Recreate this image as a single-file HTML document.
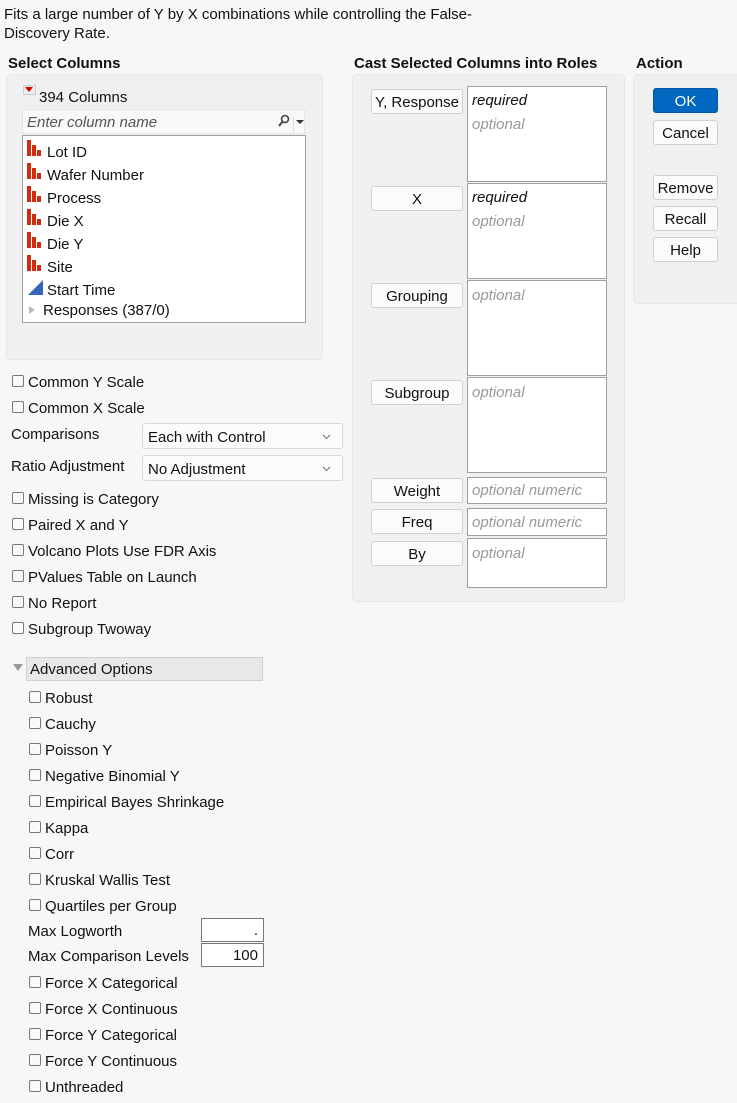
<!DOCTYPE html><html><head><style>
body{margin:0;width:737px;height:1103px;background:#f7f7f7;font-family:"Liberation Sans",sans-serif;font-size:15px;color:#111;position:relative;overflow:hidden}
.a{position:absolute;white-space:nowrap}
.t{margin-top:2px}
.b{font-weight:bold;font-size:15px}
.pn{position:absolute;background:#f0f0f0;border:1px solid #e6e6e6;border-radius:5px}
.cb{position:absolute;width:10px;height:10px;border:1px solid #777;border-radius:2px;background:#fafafa}
.btn{position:absolute;background:#fbfbfb;border:1px solid #d0d0d0;border-radius:3px;text-align:center;line-height:25px;box-sizing:border-box;height:25px}
.box{position:absolute;background:#fff;border:1px solid #a0a0a0;box-sizing:border-box}
.it{font-style:italic}
.g{color:#999}
.dd{position:absolute;background:#fbfbfb;border:1px solid #d8d8d8;border-radius:3px;box-sizing:border-box;height:26px;line-height:27px;padding-left:5px}
.dd svg{position:absolute;right:11px;top:10px}
</style></head><body>
<div class="a" style="left:4px;top:5px;line-height:19px">Fits a large number of Y by X combinations while controlling the False-<br>Discovery Rate.</div>
<div class="a b" style="left:8px;top:55px">Select Columns</div>
<div class="a b" style="left:354px;top:55px">Cast Selected Columns into Roles</div>
<div class="a b" style="left:636px;top:55px">Action</div>

<div class="pn" style="left:6px;top:74px;width:315px;height:284px"></div>
<div class="a" style="left:23px;top:85px;width:11px;height:8px;background:#eee;border:1px solid #ccc"></div>
<div class="a" style="left:25px;top:87px;width:0;height:0;border-left:4px solid transparent;border-right:4px solid transparent;border-top:5px solid #d00"></div>
<div class="a" style="left:39px;top:89px">394 Columns</div>
<div class="a" style="left:22px;top:109px;width:283px;height:25px;background:#f8f8f8;border:1px solid #e4e4e4;box-sizing:border-box"></div>
<div class="a it" style="left:27px;top:114px;color:#555">Enter column name</div>
<svg class="a" style="left:277px;top:114px" width="14" height="14"><circle cx="8" cy="5" r="3.5" fill="none" stroke="#444" stroke-width="1.6"/><path d="M6 7 L2 12" stroke="#444" stroke-width="2"/></svg>
<div class="a" style="left:293px;top:116px;width:1px;height:18px;background:#e0e0e0"></div>
<div class="a" style="left:296px;top:120px;border-left:4px solid transparent;border-right:4px solid transparent;border-top:4px solid #333"></div>
<div class="box" style="left:22px;top:135px;width:284px;height:188px"></div>
<svg class="a" style="left:27px;top:140px" width="18" height="160">
<g fill="#d42a10"><g id="i"><rect x="0" y="0" width="4" height="16"/><rect x="5" y="5" width="4" height="11"/><rect x="10" y="10" width="4" height="6"/></g>
<use href="#i" y="23"/><use href="#i" y="46"/><use href="#i" y="69"/><use href="#i" y="92"/><use href="#i" y="115"/></g>
<path d="M1 155 L16 140 L16 155Z" fill="#3366bb"/></svg>
<div class="a" style="left:47px;top:141px;line-height:23px">Lot ID<br>Wafer Number<br>Process<br>Die X<br>Die Y<br>Site<br>Start Time</div>
<div class="a" style="left:29px;top:306px;border-top:4px solid transparent;border-bottom:4px solid transparent;border-left:6px solid #bbb"></div>
<div class="a" style="left:43px;top:302px">Responses (387/0)</div>

<div class="cb" style="left:12px;top:375px"></div><div class="a t" style="left:28px;top:372px">Common Y Scale</div>
<div class="cb" style="left:12px;top:401px"></div><div class="a t" style="left:28px;top:398px">Common X Scale</div>
<div class="a t" style="left:11px;top:424px">Comparisons</div>
<div class="dd" style="left:142px;top:423px;width:201px">Each with Control<svg width="9" height="6"><path d="M1 1 L4.5 4.5 L8 1" stroke="#777" fill="none"/></svg></div>
<div class="a t" style="left:11px;top:456px">Ratio Adjustment</div>
<div class="dd" style="left:142px;top:455px;width:201px">No Adjustment<svg width="9" height="6"><path d="M1 1 L4.5 4.5 L8 1" stroke="#777" fill="none"/></svg></div>
<div class="cb" style="left:12px;top:492px"></div><div class="a t" style="left:28px;top:489px">Missing is Category</div>
<div class="cb" style="left:12px;top:518px"></div><div class="a t" style="left:28px;top:515px">Paired X and Y</div>
<div class="cb" style="left:12px;top:544px"></div><div class="a t" style="left:28px;top:541px">Volcano Plots Use FDR Axis</div>
<div class="cb" style="left:12px;top:570px"></div><div class="a t" style="left:28px;top:567px">PValues Table on Launch</div>
<div class="cb" style="left:12px;top:596px"></div><div class="a t" style="left:28px;top:593px">No Report</div>
<div class="cb" style="left:12px;top:622px"></div><div class="a t" style="left:28px;top:619px">Subgroup Twoway</div>

<div class="a" style="left:13px;top:664px;border-left:5px solid transparent;border-right:5px solid transparent;border-top:7px solid #999"></div>
<div class="a" style="left:26px;top:657px;width:237px;height:24px;background:#e8e8e8;border:1px solid #d0d0d0;box-sizing:border-box"></div>
<div class="a t" style="left:30px;top:659px">Advanced Options</div>

<div class="cb" style="left:29px;top:691px"></div><div class="a t" style="left:45px;top:688px">Robust</div>
<div class="cb" style="left:29px;top:717px"></div><div class="a t" style="left:45px;top:714px">Cauchy</div>
<div class="cb" style="left:29px;top:743px"></div><div class="a t" style="left:45px;top:740px">Poisson Y</div>
<div class="cb" style="left:29px;top:769px"></div><div class="a t" style="left:45px;top:766px">Negative Binomial Y</div>
<div class="cb" style="left:29px;top:795px"></div><div class="a t" style="left:45px;top:792px">Empirical Bayes Shrinkage</div>
<div class="cb" style="left:29px;top:821px"></div><div class="a t" style="left:45px;top:818px">Kappa</div>
<div class="cb" style="left:29px;top:847px"></div><div class="a t" style="left:45px;top:844px">Corr</div>
<div class="cb" style="left:29px;top:873px"></div><div class="a t" style="left:45px;top:870px">Kruskal Wallis Test</div>
<div class="cb" style="left:29px;top:899px"></div><div class="a t" style="left:45px;top:896px">Quartiles per Group</div>
<div class="a t" style="left:28px;top:921px">Max Logworth</div>
<div class="box" style="left:201px;top:918px;width:63px;height:24px;border-color:#777;text-align:right;padding-right:5px;line-height:23px">.</div>
<div class="a t" style="left:28px;top:946px">Max Comparison Levels</div>
<div class="box" style="left:201px;top:943px;width:63px;height:24px;border-color:#777;text-align:right;padding-right:5px;line-height:23px">100</div>
<div class="cb" style="left:29px;top:976px"></div><div class="a t" style="left:45px;top:973px">Force X Categorical</div>
<div class="cb" style="left:29px;top:1002px"></div><div class="a t" style="left:45px;top:999px">Force X Continuous</div>
<div class="cb" style="left:29px;top:1028px"></div><div class="a t" style="left:45px;top:1025px">Force Y Categorical</div>
<div class="cb" style="left:29px;top:1054px"></div><div class="a t" style="left:45px;top:1051px">Force Y Continuous</div>
<div class="cb" style="left:29px;top:1080px"></div><div class="a t" style="left:45px;top:1077px">Unthreaded</div>

<div class="pn" style="left:352px;top:74px;width:271px;height:526px"></div>
<div class="btn" style="left:371px;top:89px;width:92px">Y, Response</div>
<div class="box" style="left:467px;top:86px;width:140px;height:96px"></div>
<div class="a it" style="left:472px;top:92px">required</div><div class="a it g" style="left:472px;top:116px">optional</div>
<div class="btn" style="left:371px;top:186px;width:92px">X</div>
<div class="box" style="left:467px;top:183px;width:140px;height:96px"></div>
<div class="a it" style="left:472px;top:189px">required</div><div class="a it g" style="left:472px;top:213px">optional</div>
<div class="btn" style="left:371px;top:283px;width:92px">Grouping</div>
<div class="box" style="left:467px;top:280px;width:140px;height:96px"></div>
<div class="a it g" style="left:472px;top:287px">optional</div>
<div class="btn" style="left:371px;top:380px;width:92px">Subgroup</div>
<div class="box" style="left:467px;top:377px;width:140px;height:96px"></div>
<div class="a it g" style="left:472px;top:384px">optional</div>
<div class="btn" style="left:371px;top:478px;width:92px">Weight</div>
<div class="box" style="left:467px;top:477px;width:140px;height:27px"></div>
<div class="a it g" style="left:472px;top:482px">optional numeric</div>
<div class="btn" style="left:371px;top:509px;width:92px">Freq</div>
<div class="box" style="left:467px;top:508px;width:140px;height:28px"></div>
<div class="a it g" style="left:472px;top:514px">optional numeric</div>
<div class="btn" style="left:371px;top:541px;width:92px">By</div>
<div class="box" style="left:467px;top:538px;width:140px;height:50px"></div>
<div class="a it g" style="left:472px;top:545px">optional</div>

<div class="pn" style="left:633px;top:74px;width:110px;height:228px"></div>
<div class="btn" style="left:653px;top:88px;width:65px;background:#0067c0;border-color:#0058a8;color:#fff">OK</div>
<div class="btn" style="left:653px;top:120px;width:65px">Cancel</div>
<div class="btn" style="left:653px;top:175px;width:65px">Remove</div>
<div class="btn" style="left:653px;top:206px;width:65px">Recall</div>
<div class="btn" style="left:653px;top:237px;width:65px">Help</div>
</body></html>
